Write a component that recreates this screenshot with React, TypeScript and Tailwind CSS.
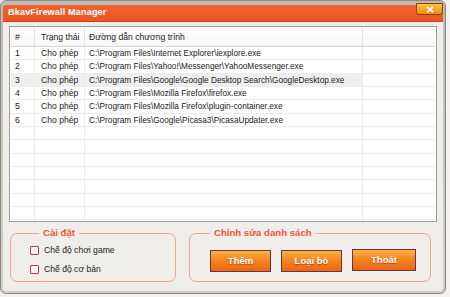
import React from 'react'

const rows = [
  { id: 1, path: 'C:\\Program Files\\Internet Explorer\\iexplore.exe' },
  { id: 2, path: 'C:\\Program Files\\Yahoo!\\Messenger\\YahooMessenger.exe' },
  { id: 3, path: 'C:\\Program Files\\Google\\Google Desktop Search\\GoogleDesktop.exe' },
  { id: 4, path: 'C:\\Program Files\\Mozilla Firefox\\firefox.exe' },
  { id: 5, path: 'C:\\Program Files\\Mozilla Firefox\\plugin-container.exe' },
  { id: 6, path: 'C:\\Program Files\\Google\\Picasa3\\PicasaUpdater.exe' },
]

const EMPTY_ROWS = 8

function Row({ n, status, path, selected }: { n?: number; status?: string; path?: string; selected?: boolean }) {
  return (
    <div className="flex h-[13.33px] border-b border-[#ececec] shrink-0">
      <div className={`w-[24px] pl-[4px] border-r border-[#ececec] leading-[13px] ${selected ? 'bg-[#efefef]' : ''}`}>{n}</div>
      <div className={`w-[50px] pl-[6px] border-r border-[#ececec] leading-[13px] ${selected ? 'bg-[#efefef]' : ''}`}>{status}</div>
      <div className={`w-[278px] pl-[4px] border-r border-[#ececec] leading-[13px] whitespace-nowrap text-[8.25px] ${selected ? 'bg-[#efefef]' : ''}`}>{path}</div>
      <div className="flex-1" />
    </div>
  )
}

function OrangeButton({ label, className }: { label: string; className?: string }) {
  return (
    <button
      className={`h-[22px] border border-[#6e3440] bg-gradient-to-b from-[#fbb040] via-[#f5821f] to-[#ee6414] text-white font-bold text-[9.5px] [text-shadow:0_1px_1px_rgba(120,40,0,0.6)] ${className ?? ''}`}
    >
      {label}
    </button>
  )
}

function Checkbox({ label }: { label: string }) {
  return (
    <label className="flex items-center gap-[5px] h-[10px]">
      <span className="w-[9px] h-[9px] border border-[#b2404e] bg-[#f8f6f4] rounded-[1px]" />
      <span className="text-[8.6px] text-[#222]">{label}</span>
    </label>
  )
}

export default function App() {
  return (
    <div className="w-[450px] h-[297px] bg-[#f3f2f0] font-['Liberation_Sans',Arial,sans-serif]">
      <div className="relative w-[446px] h-[294px] rounded-[6px] border border-[#8d8881] bg-gradient-to-b from-[#bdb9b3] to-[#d3d0cb] p-[2px] flex flex-col">
        {/* title bar */}
        <div className="mt-[2px] h-[17px] bg-gradient-to-b from-[#f2632e] to-[#ec5424] border-b border-[#c8441a] flex items-center pl-[5px] rounded-t-[3px]">
          <span className="text-white font-bold text-[9.2px] tracking-[0.1px]">BkavFirewall Manager</span>
        </div>
        <div className="absolute right-[2px] top-[2px] w-[27px] h-[12px] rounded-b-[3px] border border-[#8a3c14] bg-gradient-to-b from-[#fcc43a] to-[#f08a12] flex items-center justify-center">
          <svg width="8" height="7" viewBox="0 0 8 7">
            <path d="M1 0.8 L7 6.2 M7 0.8 L1 6.2" stroke="white" strokeWidth="1.8" />
          </svg>
        </div>

        {/* body */}
        <div className="flex-1 bg-[#efeeea] rounded-b-[4px] px-[6px] pt-[4px] flex flex-col text-[8.6px] text-[#222]">
          {/* list */}
          <div className="h-[196px] border border-[#9c9c9c] bg-white p-[1px] flex flex-col overflow-hidden">
            <div className="flex h-[19px] border-b border-[#d8d8d8] bg-gradient-to-b from-white to-[#f6f6f6] shrink-0">
              <div className="w-[24px] pl-[4px] border-r border-[#e2e2e2] flex items-center">#</div>
              <div className="w-[50px] pl-[6px] border-r border-[#e2e2e2] flex items-center">Trạng thái</div>
              <div className="w-[278px] pl-[4px] border-r border-[#e2e2e2] flex items-center">Đường dẫn chương trình</div>
              <div className="flex-1" />
            </div>
            {rows.map((r) => (
              <Row key={r.id} n={r.id} status="Cho phép" path={r.path} selected={r.id === 3} />
            ))}
            {Array.from({ length: EMPTY_ROWS }).map((_, i) => (
              <Row key={`e${i}`} />
            ))}
          </div>

          {/* bottom groups */}
          <div className="flex gap-[13px] mt-[4px] pl-[1px] pr-[6px]">
            <fieldset className="w-[166px] h-[56px] border border-[#f2a48c] rounded-[7px] pl-[19px] pt-[5px] flex flex-col gap-[9px]">
              <legend className="ml-[9px] px-[4px] text-[#f0562a] font-bold text-[9.6px]">Cài đặt</legend>
              <Checkbox label="Chế độ chơi game" />
              <Checkbox label="Chế độ cơ bản" />
            </fieldset>
            <fieldset className="flex-1 h-[56px] border border-[#f2a48c] rounded-[7px] pl-[20px] pt-[10px] flex gap-[10px]">
              <legend className="ml-[0px] px-[4px] text-[#f0562a] font-bold text-[9.6px]">Chỉnh sửa danh sách</legend>
              <div className="flex gap-[10px] items-start">
                <OrangeButton label="Thêm" className="w-[61px]" />
                <OrangeButton label="Loại bỏ" className="w-[61px]" />
                <OrangeButton label="Thoát" className="w-[64px] -mt-[1px]" />
              </div>
            </fieldset>
          </div>
        </div>
      </div>
    </div>
  )
}
